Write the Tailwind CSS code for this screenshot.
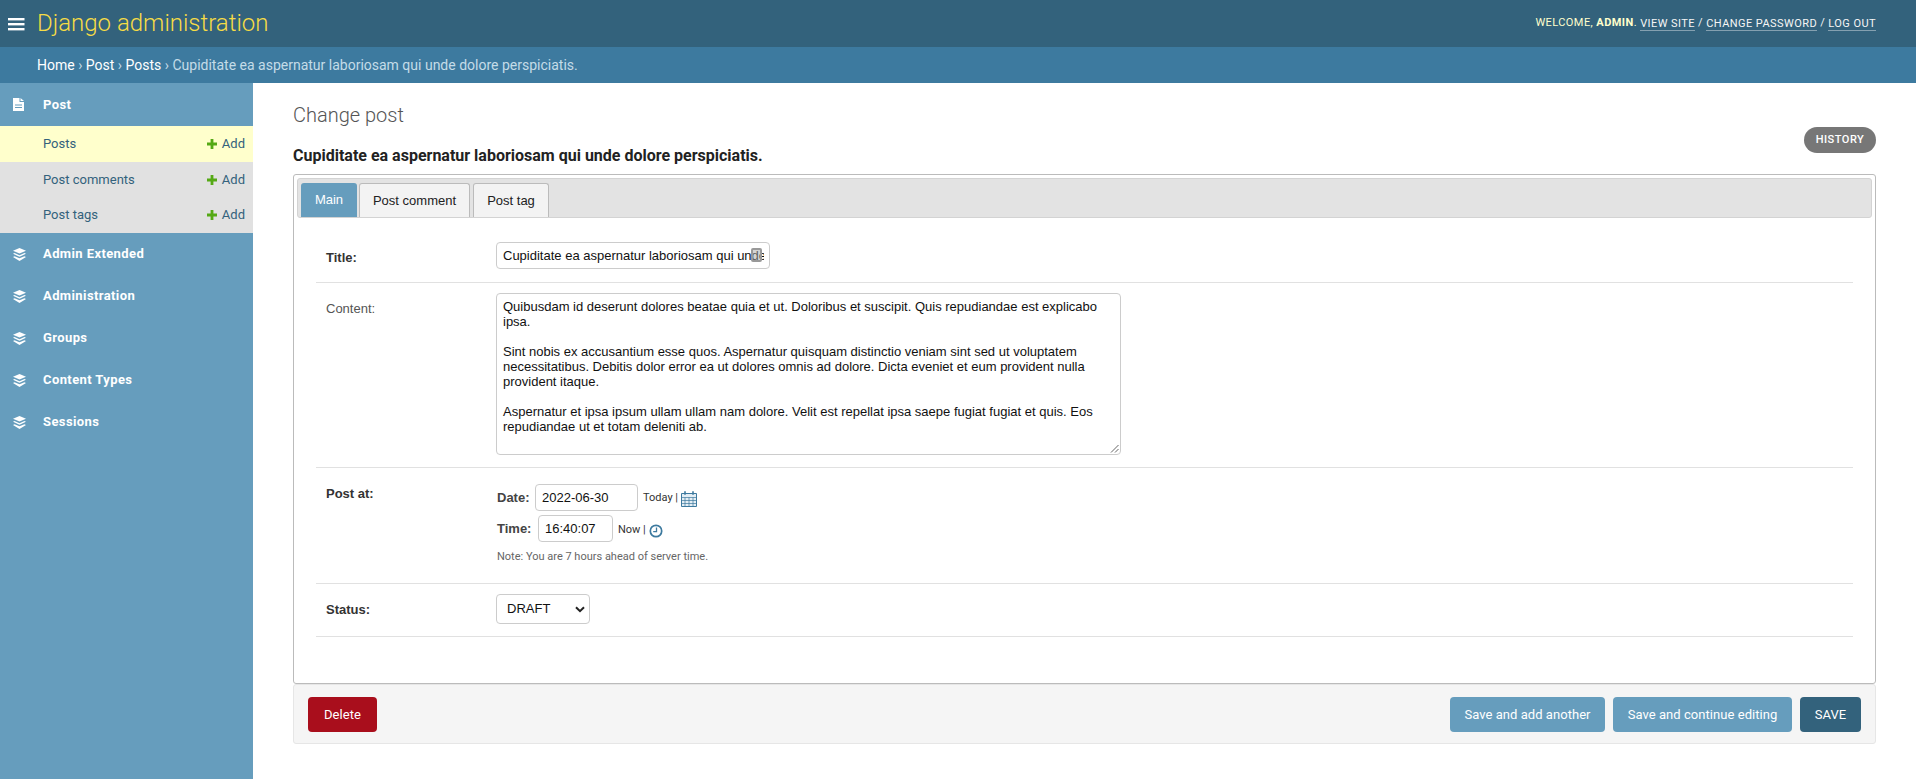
<!DOCTYPE html>
<html><head><meta charset="utf-8"><title>Change post</title>
<script src="https://cdn.jsdelivr.net/npm/@tailwindcss/browser@4"></script></head>
<body class="h-screen overflow-hidden bg-white font-['Roboto',sans-serif] text-[#333] flex flex-col">
<header class="h-[47px] shrink-0 bg-[#33627c] flex items-center justify-between pl-[8px] pr-[40px]">
  <div class="flex items-center">
    <svg class="w-[17px] h-[14px]" viewBox="0 0 17 14" fill="#fff"><rect x="0" y="1" width="16.5" height="2.4"/><rect x="0" y="6" width="16.5" height="2.4"/><rect x="0" y="11" width="16.5" height="2.4"/></svg>
    <span class="ml-[12px] mb-[2px] text-[24px] font-light text-[#f7dc45] leading-none">Django administration</span>
  </div>
  <div class="text-[11px] tracking-[0.43px] uppercase text-[#ffc] flex items-center">
    <span>Welcome, <b class="font-bold">admin</b>.&nbsp;</span>
    <a class="text-[#f5f5f5] border-b border-white/40 leading-[13px]">View site</a><span class="text-[#f5f5f5]">&nbsp;/&nbsp;</span>
    <a class="text-[#f5f5f5] border-b border-white/40 leading-[13px]">Change password</a><span class="text-[#f5f5f5]">&nbsp;/&nbsp;</span>
    <a class="text-[#f5f5f5] border-b border-white/40 leading-[13px]">Log out</a>
  </div>
</header>
<nav class="h-[36px] shrink-0 bg-[#3d7a9f] flex items-center pl-[37px] text-[14px] text-[#c4dce8]">
  <a class="text-white">Home</a><span>&nbsp;›&nbsp;</span><a class="text-white">Post</a><span>&nbsp;›&nbsp;</span><a class="text-white">Posts</a><span>&nbsp;›&nbsp;Cupiditate ea aspernatur laboriosam qui unde dolore perspiciatis.</span>
</nav>
<div class="flex-1 flex min-h-0">
  <aside class="w-[253px] shrink-0 bg-[#669dbd] text-white">
    <div class="h-[43px] flex items-center font-bold text-[13px] tracking-[0.4px] pl-[13px]">
      <svg class="w-[11px] h-[13px] mr-[19px]" viewBox="0 0 11 13"><path fill="#fff" d="M0 0h6.5v4H11v9H0z M7.5 0 11 3H7.5z"/><path stroke="#669dbd" d="M2 7h7M2 9.5h7"/></svg>Post
    </div>
    <div class="h-[36px] bg-[#ffc] flex items-center justify-between pl-[43px] pr-[8px] text-[13px] text-[#33627c]"><span>Posts</span><span class="flex items-center gap-[5px]"><svg class="w-[10px] h-[10px]" viewBox="0 0 10 10"><path fill="#55a915" d="M3.6 0h2.8v3.6H10v2.8H6.4V10H3.6V6.4H0V3.6h3.6z"/></svg>Add</span></div>
    <div class="h-[35px] bg-[#e1e1e1] flex items-center justify-between pl-[43px] pr-[8px] text-[13px] text-[#33627c]"><span>Post comments</span><span class="flex items-center gap-[5px]"><svg class="w-[10px] h-[10px]" viewBox="0 0 10 10"><path fill="#55a915" d="M3.6 0h2.8v3.6H10v2.8H6.4V10H3.6V6.4H0V3.6h3.6z"/></svg>Add</span></div>
    <div class="h-[36px] pb-[1px] bg-[#e1e1e1] flex items-center justify-between pl-[43px] pr-[8px] text-[13px] text-[#33627c]"><span>Post tags</span><span class="flex items-center gap-[5px]"><svg class="w-[10px] h-[10px]" viewBox="0 0 10 10"><path fill="#55a915" d="M3.6 0h2.8v3.6H10v2.8H6.4V10H3.6V6.4H0V3.6h3.6z"/></svg>Add</span></div>
    <div class="h-[42px] flex items-center font-bold text-[13px] tracking-[0.4px] pl-[13px]"><svg class="w-[13px] h-[13px] mr-[17px]" viewBox="0 0 13 13" fill="#fff"><path d="M6.5 0 13 2.8 6.5 5.6 0 2.8z"/><path d="M1.5 5 6.5 7.2 11.5 5 13 5.8 6.5 8.7 0 5.8z"/><path d="M1.5 8.2 6.5 10.3 11.5 8.2 13 9 6.5 13 0 9z"/></svg>Admin Extended</div>
    <div class="h-[42px] flex items-center font-bold text-[13px] tracking-[0.4px] pl-[13px]"><svg class="w-[13px] h-[13px] mr-[17px]" viewBox="0 0 13 13" fill="#fff"><path d="M6.5 0 13 2.8 6.5 5.6 0 2.8z"/><path d="M1.5 5 6.5 7.2 11.5 5 13 5.8 6.5 8.7 0 5.8z"/><path d="M1.5 8.2 6.5 10.3 11.5 8.2 13 9 6.5 13 0 9z"/></svg>Administration</div>
    <div class="h-[42px] flex items-center font-bold text-[13px] tracking-[0.4px] pl-[13px]"><svg class="w-[13px] h-[13px] mr-[17px]" viewBox="0 0 13 13" fill="#fff"><path d="M6.5 0 13 2.8 6.5 5.6 0 2.8z"/><path d="M1.5 5 6.5 7.2 11.5 5 13 5.8 6.5 8.7 0 5.8z"/><path d="M1.5 8.2 6.5 10.3 11.5 8.2 13 9 6.5 13 0 9z"/></svg>Groups</div>
    <div class="h-[42px] flex items-center font-bold text-[13px] tracking-[0.4px] pl-[13px]"><svg class="w-[13px] h-[13px] mr-[17px]" viewBox="0 0 13 13" fill="#fff"><path d="M6.5 0 13 2.8 6.5 5.6 0 2.8z"/><path d="M1.5 5 6.5 7.2 11.5 5 13 5.8 6.5 8.7 0 5.8z"/><path d="M1.5 8.2 6.5 10.3 11.5 8.2 13 9 6.5 13 0 9z"/></svg>Content Types</div>
    <div class="h-[42px] flex items-center font-bold text-[13px] tracking-[0.4px] pl-[13px]"><svg class="w-[13px] h-[13px] mr-[17px]" viewBox="0 0 13 13" fill="#fff"><path d="M6.5 0 13 2.8 6.5 5.6 0 2.8z"/><path d="M1.5 5 6.5 7.2 11.5 5 13 5.8 6.5 8.7 0 5.8z"/><path d="M1.5 8.2 6.5 10.3 11.5 8.2 13 9 6.5 13 0 9z"/></svg>Sessions</div>
  </aside>
  <main class="flex-1 min-w-0 pl-[40px] pr-[40px]">
    <h1 class="mt-[20px] h-[24px] text-[20px] font-light text-[#555] leading-[24px]">Change post</h1>
    <div class="relative h-[47px]">
      <a class="absolute right-0 top-0 w-[72px] h-[26px] rounded-[13px] bg-[#777] text-white text-[11px] font-medium tracking-[0.5px] flex items-center justify-center">HISTORY</a>
      <h2 class="absolute left-0 top-[19px] text-[16px] font-bold text-[#222] leading-[20px]">Cupiditate ea aspernatur laboriosam qui unde dolore perspiciatis.</h2>
    </div>
    <div class="h-[510px] border border-[#bbb] rounded-[3px] p-[3px]">
      <div class="h-[40px] bg-[#e3e3e3] border border-[#d3d3d3] rounded-[3px] flex items-end pl-[3px] font-['Liberation_Sans',sans-serif] text-[13px]">
        <a class="w-[56px] h-[34px] bg-[#669dbd] text-white rounded-t-[3px] flex items-center justify-center">Main</a>
        <a class="ml-[2px] w-[111px] h-[34px] bg-[#f3f3f3] text-[#222] border border-b-0 border-[#bbb] rounded-t-[3px] flex items-center justify-center">Post comment</a>
        <a class="ml-[3px] w-[76px] h-[34px] bg-[#f3f3f3] text-[#222] border border-b-0 border-[#bbb] rounded-t-[3px] flex items-center justify-center">Post tag</a>
      </div>
      <div class="mx-[19px] font-['Liberation_Sans',sans-serif] text-[13px] text-[#333]">
        <div class="h-[65px] border-b border-[#e1e1e1] flex">
          <label class="w-[180px] pl-[10px] pt-[32px] font-bold leading-[15px]">Title:</label>
          <div class="pt-[24px]">
            <div class="relative w-[274px] h-[27px] border border-[#ccc] rounded-[4px] flex items-center pl-[6px] overflow-hidden text-[#111] whitespace-nowrap">
              <span class="w-[261px] overflow-hidden">Cupiditate ea aspernatur laboriosam qui unde dolore</span>
              <span class="absolute left-[254px] top-[5px] w-[11px] h-[14px] border-2 border-[#999] bg-[#aaa]/50 rounded-[2px]"></span>
            </div>
          </div>
        </div>
        <div class="h-[185px] border-b border-[#e1e1e1] flex">
          <label class="w-[180px] pl-[10px] pt-[18px] leading-[15px] text-[#555]">Content:</label>
          <div class="pt-[10px]">
            <div class="relative w-[625px] h-[162px] border border-[#ccc] rounded-[4px] px-[6px] pt-[5px] text-[13px] leading-[15px] text-[#111]">
              <p>Quibusdam id deserunt dolores beatae quia et ut. Doloribus et suscipit. Quis repudiandae est explicabo<br>ipsa.</p>
              <p class="mt-[15px]">Sint nobis ex accusantium esse quos. Aspernatur quisquam distinctio veniam sint sed ut voluptatem<br>necessitatibus. Debitis dolor error ea ut dolores omnis ad dolore. Dicta eveniet et eum provident nulla<br>provident itaque.</p>
              <p class="mt-[15px]">Aspernatur et ipsa ipsum ullam ullam nam dolore. Velit est repellat ipsa saepe fugiat fugiat et quis. Eos<br>repudiandae ut et totam deleniti ab.</p>
              <svg class="absolute right-[1px] bottom-[1px] w-[9px] h-[9px]" viewBox="0 0 9 9" stroke="#666" fill="none"><path d="M1 8.5 8.5 1M5 8.5 8.5 5"/></svg>
            </div>
          </div>
        </div>
        <div class="h-[116px] border-b border-[#e1e1e1] flex">
          <label class="w-[180px] pl-[10px] pt-[18px] font-bold leading-[15px]">Post at:</label>
          <div class="pt-[16px]">
            <div class="flex items-center h-[27px]">
              <b class="w-[39px] pl-[1px] mt-[1px] text-[#444]">Date:</b>
              <div class="w-[103px] h-[27px] border border-[#ccc] rounded-[4px] flex items-center pl-[6px] text-[#111]">2022-06-30</div>
              <span class="ml-[5px] mt-[2px] text-[11px] text-[#333] font-['Roboto',sans-serif]">Today |</span>
              <svg class="ml-[3px] w-[16px] h-[16px] mt-[3px]" viewBox="0 0 16 16" fill="none" stroke="#3d7a9f"><path fill="#e3eef5" d="M.5 2.5h15v13H.5z"/><path stroke-width=".7" d="M.5 6.5h15M.5 9.5h15M.5 12.5h15M4 6.5v9M8 6.5v9M12 6.5v9"/><path stroke-width="1.6" d="M4 .3v3.5M12 .3v3.5"/></svg>
            </div>
            <div class="flex items-center h-[27px] mt-[4px]">
              <b class="w-[42px] pl-[1px] mt-[1px] text-[#444]">Time:</b>
              <div class="w-[75px] h-[27px] border border-[#ccc] rounded-[4px] flex items-center pl-[6px] text-[#111]">16:40:07</div>
              <span class="ml-[5px] mt-[3px] text-[11px] text-[#333] font-['Roboto',sans-serif]">Now |</span>
              <svg class="ml-[3px] mt-[4px] w-[14px] h-[14px]" viewBox="0 0 14 14" fill="none" stroke="#3d7a9f"><circle cx="7" cy="7" r="5.7" stroke-width="1.7"/><path stroke-width="1.3" d="M7.5 3.5V7.6H4.2"/></svg>
            </div>
            <p class="mt-[8px] pl-[1px] text-[11px] text-[#666] leading-[13px] font-['Roboto',sans-serif]">Note: You are 7 hours ahead of server time.</p>
          </div>
        </div>
        <div class="h-[53px] border-b border-[#e1e1e1] flex">
          <label class="w-[180px] pl-[10px] pt-[18px] font-bold leading-[15px]">Status:</label>
          <div class="pt-[10px]">
            <div class="w-[94px] h-[30px] border border-[#ccc] rounded-[4px] flex items-center justify-between pl-[10px] pr-[4px] text-[#111]">DRAFT
              <svg class="w-[10px] h-[7px]" viewBox="0 0 10 7" fill="none" stroke="#222" stroke-width="2"><path d="M1 1.2 5 5.2 9 1.2"/></svg>
            </div>
          </div>
        </div>
      </div>
    </div>
    <div class="h-[60px] bg-[#f5f5f5] border border-[#e6e6e6] rounded-[3px] flex items-center justify-between px-[14px] text-[13px] font-normal tracking-[0.05px] text-white">
      <a class="w-[69px] h-[35px] pt-[1px] rounded-[4px] bg-[#a90e1c] flex items-center justify-center">Delete</a>
      <div class="flex gap-[8px]">
        <a class="w-[155px] h-[35px] pt-[1px] rounded-[4px] bg-[#669dbd] flex items-center justify-center">Save and add another</a>
        <a class="w-[179px] h-[35px] pt-[1px] rounded-[4px] bg-[#669dbd] flex items-center justify-center">Save and continue editing</a>
        <a class="w-[61px] h-[35px] pt-[1px] rounded-[4px] bg-[#33627c] flex items-center justify-center">SAVE</a>
      </div>
    </div>
  </main>
</div>
</body></html>
